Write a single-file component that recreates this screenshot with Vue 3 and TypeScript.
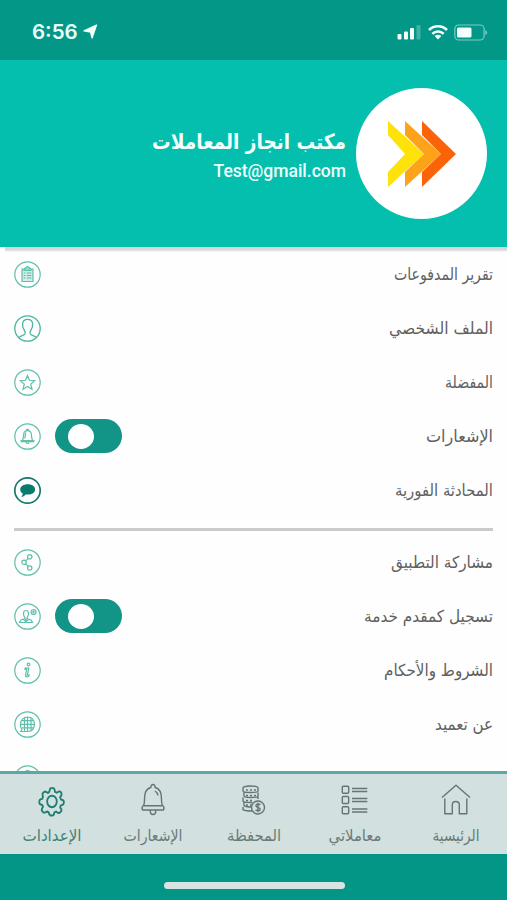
<script setup lang="ts">
import { ref } from 'vue'

type IconName =
  | 'report' | 'profile' | 'star' | 'bell' | 'chat'
  | 'share' | 'provider' | 'info' | 'globe' | 'more'

interface MenuItem {
  icon: IconName
  label: string
  width: number
  toggle?: boolean
}

interface Tab {
  id: string
  label: string
  width: number
}

const account: MenuItem[] = [
  { icon: 'report', label: 'تقرير المدفوعات', width: 99 },
  { icon: 'profile', label: 'الملف الشخصي', width: 104 },
  { icon: 'star', label: 'المفضلة', width: 48 },
  { icon: 'bell', label: 'الإشعارات', width: 67, toggle: true },
  { icon: 'chat', label: 'المحادثة الفورية', width: 98 },
]

const general: MenuItem[] = [
  { icon: 'share', label: 'مشاركة التطبيق', width: 102 },
  { icon: 'provider', label: 'تسجيل كمقدم خدمة', width: 129, toggle: true },
  { icon: 'info', label: 'الشروط والأحكام', width: 109 },
  { icon: 'globe', label: 'عن تعميد', width: 58 },
  { icon: 'more', label: '', width: 0 },
]

const groups = [account, general]

const tabs: Tab[] = [
  { id: 'home', label: 'الرئيسية', width: 47 },
  { id: 'orders', label: 'معاملاتي', width: 53 },
  { id: 'wallet', label: 'المحفظة', width: 54 },
  { id: 'alerts', label: 'الإشعارات', width: 59 },
  { id: 'settings', label: 'الإعدادات', width: 59 },
]

const active = ref('settings')
const enabled = ref<Record<string, boolean>>({ bell: false, provider: false })

function flip(name: string) {
  enabled.value[name] = !enabled.value[name]
}
</script>

<template>
  <div class="screen">
    <div class="status">
      <div class="clock">
        <span>6:56</span>
        <svg width="15" height="15" viewBox="0 0 15 15"><path d="M13.500 1 9.100 14 7.500 8 1 6.900Z" fill="#f0fffc" stroke="#f0fffc" stroke-width="1.300" stroke-linejoin="round" /></svg>
      </div>
      <svg class="signals" width="92" height="18" viewBox="0 0 92 18">
        <g fill="#f4fffd">
          <rect x="1.500" y="11" width="4" height="5.500" rx="1" />
          <rect x="8" y="8.500" width="4" height="8" rx="1" />
          <rect x="14" y="5" width="4" height="11.500" rx="1" />
          <rect x="20.500" y="2" width="4" height="14.500" rx="1" opacity=".25" />
          <path d="m42 16.500-3.300-3.400a4.700 4.700 0 0 1 6.600 0Z" />
          <rect x="61" y="4.500" width="14.500" height="10" rx="1.500" />
          <path d="M89.200 7v5q2-1 2-2.500t-2-2.500Z" opacity=".45" />
        </g>
        <g fill="none" stroke="#f4fffd">
          <path d="M33 7a12.800 12.800 0 0 1 18 0M36.300 10.800a8.200 8.200 0 0 1 11.400 0" stroke-width="2.500" />
          <rect x="58.800" y="2" width="29.300" height="15" rx="4" stroke-width="1.200" opacity=".5" />
        </g>
      </svg>
    </div>

    <header class="header">
      <div class="avatar">
        <svg width="68" height="66" viewBox="0 0 68 66">
          <path d="M0 0 36 33 0 66V51L17 33 0 14Z" fill="#fee20a" />
          <path d="M17 0 53 33 17 66V51L36 33 17 14Z" fill="#fda31a" />
          <path d="M34 0 68 33 34 66V51L53 33 34 14Z" fill="#fb6309" />
        </svg>
      </div>
      <div class="identity">
        <svg class="title" width="206" height="34">
          <text x="206" y="20" textLength="194" lengthAdjust="spacingAndGlyphs">مكتب انجاز المعاملات</text>
        </svg>
        <span class="mail">Test@gmail.com</span>
      </div>
    </header>

    <main class="menu">
      <section v-for="(group, g) in groups" :key="g" class="group">
        <div v-for="item in group" :key="item.icon" class="row">
          <svg class="label" width="150" height="40">
            <text v-if="item.label" x="146" y="26" :textLength="item.width" lengthAdjust="spacingAndGlyphs">{{ item.label }}</text>
          </svg>
          <div class="controls">
            <button v-if="item.toggle" class="toggle" :class="{ on: enabled[item.icon] }" @click="flip(item.icon)"><i /></button>
            <svg class="icon" :class="item.icon" width="27" height="27" viewBox="0.500 0.500 27 27">
              <circle cx="14" cy="14" r="12.700" />
              <template v-if="item.icon === 'report'">
                <path d="M8.500 8.500h11v12.500h-11ZM10.500 8.500l2-1.500a1.700 1.700 0 0 1 3 0l2 1.500v1.500h-7Z" fill="#62c5b0" fill-opacity=".3" />
                <path d="M10.300 12.500h1.500m1.500 0h4.500M10.300 15h1.500m1.500 0h4.500M10.300 17.500h1.500m1.500 0h4.500" />
              </template>
              <path v-else-if="item.icon === 'profile'" d="M5.500 23c1.500-2.200 5-1.800 6-3.800.7-1.600-.2-2.700-1-4-1-1.600-1.600-4-1.400-6.200.3-3 2-4.200 5-4.200s4.700 1.200 5 4.200c.2 2.200-.4 4.600-1.400 6.200-.8 1.300-1.700 2.400-1 4 1 2 4.500 1.600 6 3.800" />
              <path v-else-if="item.icon === 'star'" d="m14 7 2 4.800 5.200.4-4 3.400 1.300 5.100-4.500-2.800-4.500 2.800 1.300-5.100-4-3.400 5.200-.4Z" />
              <path v-else-if="item.icon === 'bell'" d="M7.700 18.200h12.600v1H7.700ZM9 17.500c1.200-2 .8-3.500 1.200-6 .3-2 1.600-3.300 3.800-3.300s3.500 1.300 3.800 3.300c.4 2.500 0 4 1.200 6M13 7.700a1 1 0 0 1 2 0M12.500 19.500a1.500 1.500 0 0 0 3 0M12.500 10c-1 1.500-.5 4-1.300 6" />
              <path v-else-if="item.icon === 'chat'" class="solid" d="M14.300 7.800c4.300 0 7.300 2.200 7.300 5.100s-3 5.200-7.300 5.200c-1 0-1.500 0-2.200-.2-1.200 1.500-2.500 2.300-4.200 2.400.8-.8 1.300-1.900 1.500-3.200-1.600-.9-2.700-2.300-2.700-4.200 0-2.900 3.300-5.100 7.600-5.100Z" />
              <template v-else-if="item.icon === 'share'">
                <circle cx="16.200" cy="8.300" r="2.200" /><circle cx="10.500" cy="13.800" r="2.200" /><circle cx="16.200" cy="19.500" r="2.200" />
                <path d="m12.200 12.300 2.500-2.500m-2.500 5.500 2.500 2.800" />
              </template>
              <template v-else-if="item.icon === 'provider'">
                <path d="M12.500 8c1.700 0 2.500 1.200 2.500 3 0 1.700-.5 3-1.300 3.800v1.400l3.800 1.300 1.500 2.500H6l1.500-2.500 3.800-1.300v-1.400C10.500 14 10 12.700 10 11c0-1.800.8-3 2.500-3ZM10 16.800l2.500 2.500 2.500-2.500M12.500 16v4" />
                <circle cx="20" cy="9.500" r="2.500" /><path d="M18.500 9.500h3M20 8v3" />
              </template>
              <path v-else-if="item.icon === 'info'" d="M15 6.700a1.300 1.300 0 1 1 0 2.600 1.300 1.300 0 1 1 0-2.600ZM11.500 11.500h3.800l-1.500 7.300 1.800-.3-.4 1.500q-3.200 1-3.200-1l1.200-6.300-1.700.2Z" />
              <template v-else-if="item.icon === 'globe'">
                <path d="M8.500 19q-2-2.500-1.500-6Q8 6.800 14.200 6.500q6.300.3 6.800 7 0 7-6.500 7.500H7.200Z" />
                <path d="M14 6.800v14M7 13.800h14M8.200 10.200h11.600M8.200 17.400h11.600M11 7.200v13.500M17.500 7.200v12.500" />
              </template>
              <circle v-else cx="14" cy="9" r="3" fill="#5fbfab" />
            </svg>
          </div>
        </div>
      </section>
    </main>

    <nav class="tabs">
      <button v-for="tab in tabs" :key="tab.id" class="tab" :class="{ active: tab.id === active }" @click="active = tab.id">
        <svg class="glyph" width="32" height="32" viewBox="0 0 32 32">
          <path v-if="tab.id === 'home'" d="M2 14.500 16 2.300l14 12.200M4.800 15.500V30.800h7.500V22q0-3.500 3.500-3.500t3.500 3.500v8.800h7.500V15.500" />
          <path v-else-if="tab.id === 'orders'" d="M4.500 3.200h4q1.200 0 1.200 1v5q0 1-1.200 1h-4q-1.200 0-1.200-1v-5q0-1 1.200-1ZM4.500 13.500h4q1.200 0 1.200 1v5q0 1-1.200 1h-4q-1.200 0-1.200-1v-5q0-1 1.200-1ZM4.500 23.800h4q1.200 0 1.200 1v5q0 1-1.200 1h-4q-1.200 0-1.200-1v-5q0-1 1.200-1ZM13 5.500h15.300M13 8.500h15.300M13 15.500h15.300M13 18.500h15.300M13 26h15.300M13 29h15.300" />
          <template v-else-if="tab.id === 'wallet'">
            <path d="M5 5q0-2 7.500-2T20 5v3q0 1.500-7.500 1.500T5 8ZM6 9.500v3.500q0 1.500 7 1.500t7-1.500V9.500M5 14.500V18q0 1.500 7.500 1.500h2M20 14v2M6 19v3.500q1 1.500 8 1.500M5 24v2.500q1 1.500 9.500 1.500M8 7h2m2 0h2m2 0h2M8 12.500h2m2 0h2m2 0h2M8 17.500h2m2 0h2M8 22h2m2 0h2" />
            <circle cx="20" cy="24.500" r="6.500" />
            <path d="M22.300 22q-.9-1-2.300-1t-2.100 1.400q0 1.500 2.100 2t2.100 2-2.100 1.400-2.400-1M20 19.800v9.400" />
          </template>
          <path v-else-if="tab.id === 'alerts'" d="M5.500 27q-1.300-3 1-4.500Q7.500 21 7.500 16q0-10 6.300-11.500Q14 1.500 16 1.500t2.200 3Q24.500 6 24.500 16q0 5 1 6.500 2.300 1.500 1 4.500ZM7 22.700h18M13.200 27.500q0 4 2.800 4t2.800-4M18 8q2.500 1.500 3 4.500" />
          <g v-else transform="translate(2.200 3.300) scale(.86 .92)">
            <path d="m13.500 3.500 1-1.500h3.500l1 1.500.5 2.500 2.200 1 2.300-1.400 2 .2 1.200 2-.2 2-1.500 2 .9 2.500 2.500.7 1 1.500-.4 2.500-1 1.200-2.200.6-.8 2.200 1.500 2.100-.2 2.100-2.200 1.800-2-.3-1.800-1.200-1.900.9-.9 2.600-1.500.8-2.500-.1-1.200-1.500-.7-2-2-.8-2.200 1.200-2-.2-1.800-2.200.2-1.900 1.300-2-.9-2-2.500-.8-.9-1.400.2-2.700 1-1.200 2.200-.6.9-2.400L5 9.700l.2-2L7.100 5.800l2 .1 2.200 1.400L13 6Z" />
            <ellipse cx="16" cy="16.500" rx="5.600" ry="6.200" />
          </g>
        </svg>
        <svg class="tab-label" width="84" height="34">
          <text x="42" y="22" :textLength="tab.width" lengthAdjust="spacingAndGlyphs">{{ tab.label }}</text>
        </svg>
      </button>
    </nav>
    <footer class="home-area"><div class="indicator" /></footer>
  </div>
</template>

<style>
body {
  margin: 0;
}
</style>

<style scoped>
.screen {
  width: 507px;
  height: 900px;
  display: flex;
  flex-direction: column;
  overflow: hidden;
  background: #fefefe;
  direction: rtl;
  font-family: "DejaVu Sans", sans-serif;
}
button {
  border: 0;
  padding: 0;
  background: none;
  font: inherit;
}
.status {
  height: 60px;
  flex: none;
  box-sizing: border-box;
  padding: 3px 19px 0 32px;
  display: flex;
  direction: ltr;
  align-items: center;
  justify-content: space-between;
  background: #039788;
}
.clock {
  display: flex;
  align-items: center;
  gap: 5px;
  color: #ecfffb;
  font: 600 20.500px/26px Inter, sans-serif;
}
.header {
  height: 187px;
  flex: none;
  box-sizing: border-box;
  padding: 28px 20px 0 0;
  display: flex;
  align-items: flex-start;
  gap: 10px;
  background: #04bfae;
}
.avatar {
  width: 131px;
  height: 131px;
  border-radius: 50%;
  background: #fff;
  display: grid;
  place-items: center;
}
.identity {
  display: flex;
  flex-direction: column;
  padding-top: 41px;
}
svg {
  overflow: visible;
}
.title {
  display: block;
  fill: #f2fffd;
  font-size: 21px;
  font-weight: 700;
}
.mail {
  direction: ltr;
  text-align: right;
  margin-top: -4px;
  color: #effffc;
  font: 500 17.500px/24px Roboto, sans-serif;
}
.menu {
  flex: 1;
  min-height: 0;
  overflow: hidden;
  padding: 0 14px;
  background: linear-gradient(#d0d4d4, #d8dbdb 3px, #fefefe 5px) no-repeat 5px 0 / 502px 5px;
}
.group + .group {
  border-top: 3px solid #cacaca;
  margin-top: 11px;
  padding-top: 4px;
}
.row {
  height: 54px;
  display: flex;
  align-items: center;
  justify-content: space-between;
}
.label {
  margin-right: -4px;
  fill: #606060;
  font-size: 16.500px;
}
.controls {
  display: flex;
  align-items: center;
  gap: 14px;
}
.toggle {
  width: 67px;
  height: 34px;
  border-radius: 17px;
  background: #129486;
  display: flex;
  direction: ltr;
  align-items: center;
  padding-left: 13px;
  box-sizing: border-box;
}
.toggle.on {
  padding-left: 29px;
}
.toggle i {
  width: 26px;
  height: 25px;
  border-radius: 50%;
  background: #fff;
}
.icon {
  fill: none;
  stroke: #5fbfab;
  stroke-width: 1.200;
}
.icon.profile {
  stroke: #4bb4a0;
  stroke-width: 1.300;
}
.icon.chat {
  stroke: #17786a;
  stroke-width: 1.700;
}
.solid {
  fill: #087c6c;
  stroke: none;
}
.tabs {
  height: 83px;
  flex: none;
  box-sizing: border-box;
  border-top: 3px solid #5ca9a3;
  display: grid;
  grid-template-columns: repeat(5, 101.200px);
  background: #d2e1df;
}
.tab {
  display: flex;
  flex-direction: column;
  align-items: center;
  justify-content: flex-start;
  padding-top: 9px;
}
.glyph {
  display: block;
  flex: none;
  fill: none;
  stroke: #657572;
  stroke-width: 1.400;
  stroke-linejoin: round;
}
.tab-label {
  display: block;
  flex: none;
  margin-top: 4px;
  fill: #6b7a77;
  font-size: 16px;
  text-anchor: middle;
}
.active .glyph {
  stroke: #207d70;
  stroke-width: 2.100;
}
.active .tab-label {
  fill: #3d8478;
}
.home-area {
  height: 46px;
  flex: none;
  display: flex;
  justify-content: center;
  background: #039586;
}
.indicator {
  width: 181px;
  height: 7px;
  margin-top: 28px;
  margin-right: -1px;
  border-radius: 4px;
  background: #d7e4e2;
}
</style>
